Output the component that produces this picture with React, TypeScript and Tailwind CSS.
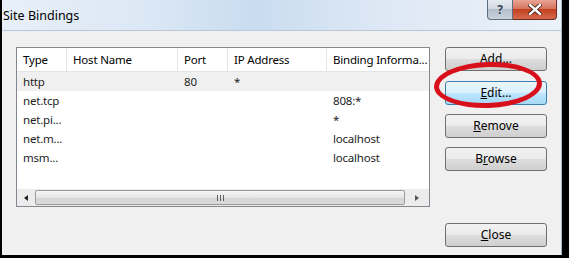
import React from "react";

const cols = [
  { label: "Type", w: "w-[50px]" },
  { label: "Host Name", w: "w-[111px]" },
  { label: "Port", w: "w-[50px]" },
  { label: "IP Address", w: "w-[99px]" },
  { label: "Binding Informa...", w: "flex-1" },
];

const rows = [
  ["http", "", "80", "*", ""],
  ["net.tcp", "", "", "", "808:*"],
  ["net.pi...", "", "", "", "*"],
  ["net.m...", "", "", "", "localhost"],
  ["msm...", "", "", "", "localhost"],
];

const grayBtn =
  "h-[24px] w-[102px] flex items-center justify-center rounded-[3px] border border-[#707070] bg-[linear-gradient(#f2f2f2_0%,#ebebeb_50%,#dddddd_50%,#cfcfcf_100%)] text-[12px] text-black";

export default function App() {
  return (
    <div className="w-[569px] h-[258px] bg-black flex pl-[2px] pr-[7px] pb-[3px] font-['Segoe_UI','Noto_Sans',sans-serif]">
      <div className="relative flex-1 flex flex-col border-r border-[#a9b8c9]">
        {/* title bar */}
        <div className="h-[30px] flex justify-between bg-[linear-gradient(90deg,#e8eff8_0%,#dce8f5_25%,#c9dcf0_45%,#dfe9f5_70%,#eaf1f9_100%)]">
          <span className="pt-[7px] pl-[1px] text-[12.5px] text-black">Site Bindings</span>
          <div className="flex h-[20px] mr-[4px]">
            <div className="w-[26px] h-[20px] rounded-bl-[4px] border border-t-0 border-[#5f6f83] bg-[linear-gradient(#e6ebf1_0%,#cfd7e0_50%,#b4bfcc_50%,#c9d2dc_100%)] flex items-center justify-center text-[12px] font-bold text-[#3b4656]">
              ?
            </div>
            <div className="w-[44px] h-[20px] rounded-br-[4px] border border-l-0 border-t-0 border-[#6a2a22] bg-[linear-gradient(#e8a493_0%,#d4705a_50%,#c4411f_50%,#d46a4b_100%)] flex items-center justify-center">
              <svg width="14" height="11" viewBox="0 0 14 11">
                <path d="M2 1 L12 10 M12 1 L2 10" stroke="#3a1a12" strokeWidth="4" strokeLinecap="square" />
                <path d="M2 1 L12 10 M12 1 L2 10" stroke="#ffffff" strokeWidth="2.4" strokeLinecap="square" />
              </svg>
            </div>
          </div>
        </div>

        {/* client area */}
        <div className="flex-1 flex bg-[#f0f0f0] pl-[14px] pt-[16px] pb-[8px] border-t border-[#b8c8d9]">
          <div className="w-[414px] h-[160px] border border-[#828790] bg-white flex flex-col text-[11.5px] tracking-[-0.2px] text-[#1e1e1e]">
            <div className="h-[24px] flex border-b border-[#e5e5e5] text-black">
              {cols.map((c, i) => (
                <div
                  key={c.label}
                  className={`${c.w} ${i < cols.length - 1 ? "border-r border-[#e5e5e5]" : ""} flex items-center pl-[6px] whitespace-nowrap overflow-hidden`}
                >
                  {c.label}
                </div>
              ))}
            </div>
            {rows.map((r, ri) => (
              <div key={ri} className={`h-[19px] flex ${ri === 0 ? "bg-[#f0f0f0]" : ""}`}>
                {r.map((cell, ci) => (
                  <div
                    key={ci}
                    className={`${cols[ci].w} flex items-center pl-[6px] whitespace-nowrap overflow-hidden`}
                  >
                    {cell}
                  </div>
                ))}
              </div>
            ))}
            <div className="flex-1" />
            {/* horizontal scrollbar */}
            <div className="h-[17px] flex bg-[#ececec]">
              <div className="w-[18px] flex items-center justify-center">
                <div className="w-0 h-0 border-y-[3.5px] border-y-transparent border-r-[4px] border-r-[#222]" />
              </div>
              <div className="flex-1 my-[1px] rounded-[2px] border border-[#9a9a9a] bg-[linear-gradient(#f4f4f4_0%,#e6e6e6_50%,#d6d6d6_50%,#d9d9d9_100%)] flex items-center justify-center gap-[2px]">
                <div className="w-[1px] h-[6px] bg-[#5f5f5f]" />
                <div className="w-[1px] h-[6px] bg-[#5f5f5f]" />
                <div className="w-[1px] h-[6px] bg-[#5f5f5f]" />
              </div>
              <div className="w-[24px] flex items-center justify-center">
                <div className="w-0 h-0 border-y-[3.5px] border-y-transparent border-l-[4px] border-l-[#555]" />
              </div>
            </div>
          </div>

          <div className="ml-[15px] flex flex-col">
            <button className={grayBtn}>Add...</button>
            <button className="mt-[10px] h-[24px] w-[102px] flex items-center justify-center rounded-[3px] border border-[#3c7fb1] bg-[linear-gradient(#eaf6fd_0%,#d9f0fc_50%,#bee6fd_50%,#a7d9f5_100%)] text-[12px] text-black">
              <span><span className="underline">E</span>dit...</span>
            </button>
            <button className={`${grayBtn} mt-[9px]`}>
              <span><span className="underline">R</span>emove</span>
            </button>
            <button className={`${grayBtn} mt-[9px]`}>
              <span>B<span className="underline">r</span>owse</span>
            </button>
            <button className={`${grayBtn} mt-auto`}>
              <span><span className="underline">C</span>lose</span>
            </button>
          </div>
        </div>

        {/* red annotation ellipse */}
        <div className="absolute left-[432px] top-[62px] w-[108px] h-[46px] rounded-[50%] border-[5px] border-[#d8101c] -rotate-[2deg]" />
      </div>
    </div>
  );
}
